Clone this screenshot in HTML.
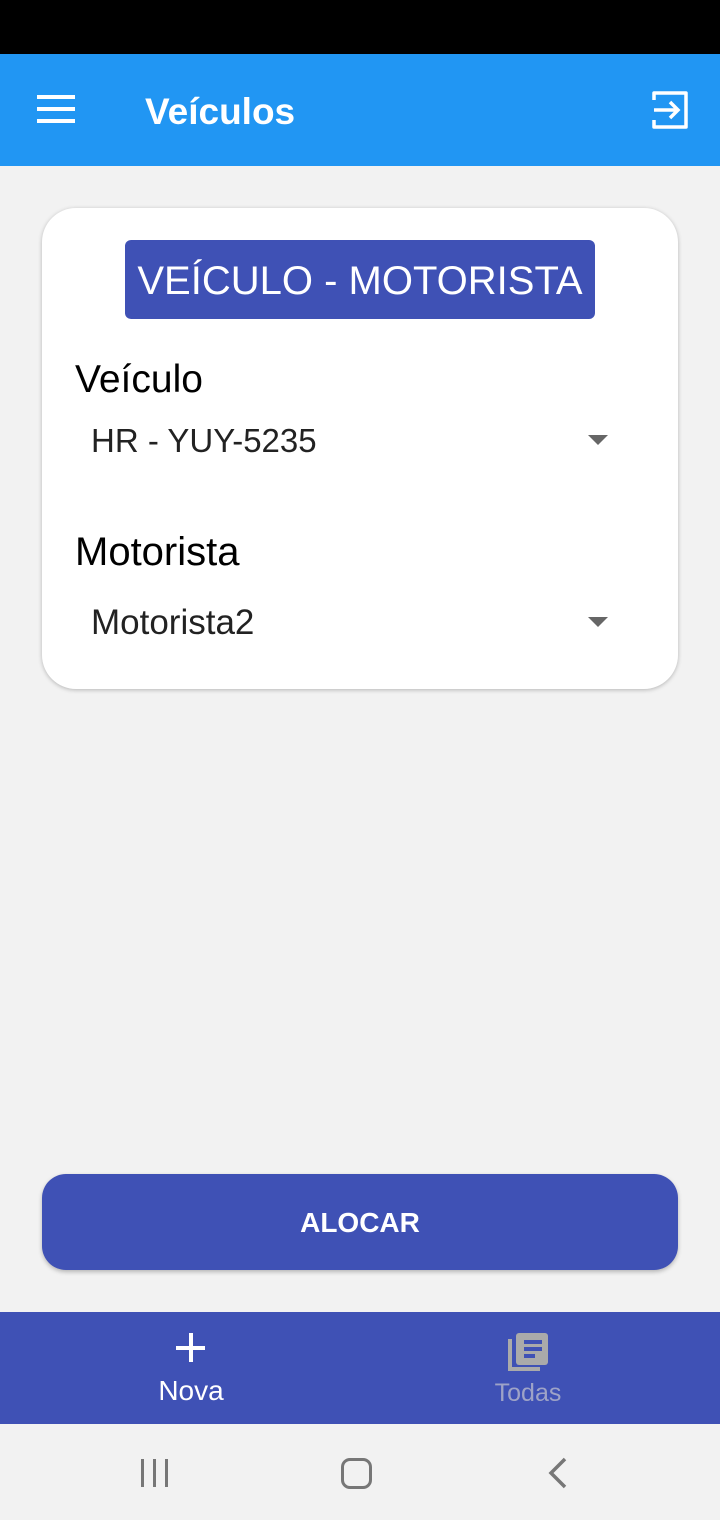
<!DOCTYPE html>
<html><head><meta charset="utf-8"><style>
*{margin:0;padding:0;box-sizing:border-box}
body{width:720px;height:1520px;background:#f2f2f2;font-family:"Liberation Sans",sans-serif;position:relative;overflow:hidden}
.abs{position:absolute}
</style></head><body>
<div class="abs" style="left:0;top:0;width:720px;height:54px;background:#000"></div>
<div class="abs" style="left:0;top:54px;width:720px;height:112px;background:#2196f3"></div>
<div class="abs" style="left:37px;top:95px;width:38px;height:4px;background:#fff"></div>
<div class="abs" style="left:37px;top:107px;width:38px;height:4px;background:#fff"></div>
<div class="abs" style="left:37px;top:119px;width:38px;height:4px;background:#fff"></div>
<div class="abs" style="left:145px;top:90px;color:#fff;font-size:37px;font-weight:bold;line-height:44px">Veículos</div>
<svg class="abs" style="left:650px;top:90px" width="42" height="40" viewBox="0 0 42 40"><path d="M4 10V3h32v34H4v-7" fill="none" stroke="#fff" stroke-width="3.5" stroke-linejoin="round"/><path d="M4 20h24M20 12l8 8-8 8" fill="none" stroke="#fff" stroke-width="3.5"/></svg>
<div class="abs" style="left:42px;top:208px;width:636px;height:481px;background:#fff;border-radius:34px;box-shadow:0 1px 4px rgba(0,0,0,.25)"></div>
<div class="abs" style="left:125px;top:240px;width:470px;height:79px;background:#3f51b5;border-radius:6px;color:#fff;font-size:40px;text-align:center;line-height:82px">VEÍCULO - MOTORISTA</div>
<div class="abs" style="left:75px;top:358px;font-size:39px;color:#000">Veículo</div>
<div class="abs" style="left:91px;top:422px;font-size:33px;color:#222">HR - YUY-5235</div>
<div class="abs" style="left:588px;top:435px;width:0;height:0;border-left:10px solid transparent;border-right:10px solid transparent;border-top:10px solid #666"></div>
<div class="abs" style="left:75px;top:530px;font-size:40px;color:#000">Motorista</div>
<div class="abs" style="left:91px;top:603px;font-size:35px;color:#222">Motorista2</div>
<div class="abs" style="left:588px;top:617px;width:0;height:0;border-left:10px solid transparent;border-right:10px solid transparent;border-top:10px solid #666"></div>
<div class="abs" style="left:42px;top:1174px;width:636px;height:96px;background:#3f51b5;border-radius:24px;box-shadow:0 2px 4px rgba(0,0,0,.25);color:#fff;font-size:28px;font-weight:bold;text-align:center;line-height:98px">ALOCAR</div>
<div class="abs" style="left:0;top:1312px;width:720px;height:112px;background:#3f51b5"></div>
<div class="abs" style="left:176px;top:1346px;width:29px;height:4px;background:#fff"></div>
<div class="abs" style="left:189px;top:1333px;width:4px;height:29px;background:#fff"></div>
<div class="abs" style="left:155px;top:1375px;width:72px;text-align:center;color:#fff;font-size:28px">Nova</div>
<svg class="abs" style="left:507px;top:1331px" width="42" height="42" viewBox="0 0 42 42"><path d="M3 8v30h30" fill="none" stroke="#aaa" stroke-width="4"/><rect x="9" y="2" width="32" height="32" rx="3" fill="#aaa"/><rect x="17" y="9" width="18" height="4" fill="#3f51b5"/><rect x="17" y="16" width="18" height="4" fill="#3f51b5"/><rect x="17" y="23" width="11" height="4" fill="#3f51b5"/></svg>
<div class="abs" style="left:480px;top:1379px;width:96px;text-align:center;color:#9ea3c7;font-size:25px">Todas</div>
<div class="abs" style="left:141px;top:1459px;width:3px;height:28px;background:#777"></div>
<div class="abs" style="left:153px;top:1459px;width:3px;height:28px;background:#777"></div>
<div class="abs" style="left:165px;top:1459px;width:3px;height:28px;background:#777"></div>
<div class="abs" style="left:341px;top:1458px;width:31px;height:31px;border:3px solid #777;border-radius:9px"></div>
<svg class="abs" style="left:545px;top:1456px" width="24" height="34" viewBox="0 0 24 34"><path d="M20 3L6 17l14 14" fill="none" stroke="#777" stroke-width="3.5"/></svg>
</body></html>
